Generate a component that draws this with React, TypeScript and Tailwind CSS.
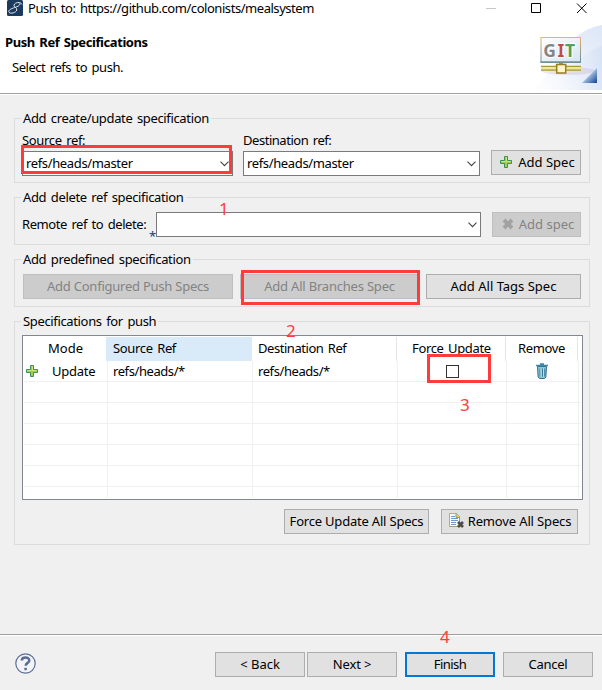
import type { ReactNode } from 'react';

function Group({ title, className, children }: { title: string; className: string; children: ReactNode }) {
  return (
    <section className={`relative ml-[14px] w-[576px] border border-[#dcdcdc] ${className}`}>
      <h2 className="absolute top-[-10px] left-[6px] h-[18px] bg-[#f0f0f0] pr-[2px] pl-[2px] leading-[18px] tracking-[-0.35px]">{title}</h2>
      {children}
    </section>
  );
}

function Btn({ children, className = '', disabled = false, primary = false }: { children: ReactNode; className?: string; disabled?: boolean; primary?: boolean }) {
  const tone = disabled
    ? 'border border-[#bfbfbf] bg-[#cccccc] text-[#838383]'
    : primary
      ? 'border-2 border-[#0078d7] bg-[#e1e1e1]'
      : 'border border-[#adadad] bg-[#e1e1e1]';
  return (
    <button className={`flex h-[25px] shrink-0 items-center justify-center pb-[2px] whitespace-nowrap ${tone} ${className}`}>
      {children}
    </button>
  );
}

function Combo({ value, className }: { value: string; className: string }) {
  return (
    <div className={`flex h-[25px] shrink-0 items-center justify-between border border-[#7a7a7a] bg-white pr-[3px] pl-[3px] ${className}`}>
      <span className="pb-[2px] tracking-[-0.36px]">{value}</span>
      <svg width="9" height="6" viewBox="0 0 9 6" fill="none" stroke="#444" strokeWidth="1.1">
        <path d="M.5 .7 4.5 4.7 8.5 .7" />
      </svg>
    </div>
  );
}

function Plus() {
  return (
    <svg width="12" height="12" viewBox="0 0 12 12" className="shrink-0">
      <path d="M4.5 .5h3v4h4v3h-4v4h-3v-4h-4v-3h4z" fill="#a3cb4e" stroke="#3f8f58" />
      <path d="M5.5 1.5h1v4h4M1.5 5.5h4" fill="none" stroke="#d3e47a" />
    </svg>
  );
}

function Mark({ children, className }: { children: string; className: string }) {
  return <span className={`absolute z-20 text-[17px] leading-[17px] text-[#ff3b3b] ${className}`}>{children}</span>;
}

const rows = [0, 1, 2, 3, 4, 5, 6];

export default function App() {
  return (
    <main className="relative flex h-[690px] w-[602px] flex-col overflow-hidden bg-[#f0f0f0] font-['Noto_Sans',sans-serif] text-[13px] leading-[18px] tracking-[-0.35px] [word-spacing:1.5px] text-black">
      <header className="relative h-[95px] border-b border-white bg-white">
        <svg className="absolute top-[24px] right-0" width="72" height="66" viewBox="0 0 72 66">
          <defs>
            <linearGradient id="sweep" x1="0" y1="1" x2="1" y2="0">
              <stop offset="0" stopColor="#fff" />
              <stop offset=".5" stopColor="#eef3fb" />
              <stop offset="1" stopColor="#dce6f7" />
            </linearGradient>
            <linearGradient id="sweep2" x1="0" y1="0" x2="1" y2="0">
              <stop offset="0" stopColor="#fff" stopOpacity="0" />
              <stop offset="1" stopColor="#cfdcf4" />
            </linearGradient>
            <linearGradient id="panel" x1="0" y1="0" x2="1" y2="1">
              <stop offset="0" stopColor="#fff" />
              <stop offset="1" stopColor="#d5e4f2" />
            </linearGradient>
            <linearGradient id="frame" x1="0" y1="0" x2="0" y2="1">
              <stop offset="0" stopColor="#e6b469" />
              <stop offset="1" stopColor="#648f9f" />
            </linearGradient>
            <linearGradient id="corner" x1="0" y1="0" x2="1" y2="1">
              <stop offset=".4" stopColor="#b7d3f1" />
              <stop offset="1" stopColor="#123f8e" />
            </linearGradient>
          </defs>
          <path d="M0 66C25 55 30 8 72 1v65z" fill="url(#sweep)" />
          <path d="M10 66C35 58 45 30 72 22v44z" fill="url(#sweep2)" opacity=".6" />
          <ellipse cx="38" cy="47" rx="27" ry="4" fill="#b58aa0" opacity=".2" />
          <rect x="11" y="13.500" width="39.500" height="25" fill="url(#panel)" stroke="url(#frame)" />
          <path d="M10.500 38h40.500" stroke="#6f9296" strokeWidth="1.500" />
          <path d="M11 42.500h40M11 46h40" stroke="#a8993a" strokeWidth="1.300" />
          <path d="M11 44.300h40" stroke="#f0e79b" strokeWidth="2" />
          <path d="M31 39v2" stroke="#a8993a" strokeWidth="4" />
          <rect x="26.700" y="40.500" width="9" height="8.500" fill="#fff4cb" stroke="#9b7a29" strokeWidth="1.500" />
          <path d="M67 44v15H52z" fill="url(#corner)" />
          <text y="32.700" fontFamily="Noto Sans, sans-serif" fontWeight="700" fontSize="17.500" letterSpacing="0" stroke="#fff" strokeWidth="2" paintOrder="stroke">
            <tspan x="13.300" fill="#858585">G</tspan>
            <tspan x="27.500" fill="#c04b4b">I</tspan>
            <tspan x="35" fill="#55a05a">T</tspan>
          </text>
        </svg>
        <div className="flex h-[17px] items-start pl-[7px]">
          <svg width="16" height="16" viewBox="0 0 16 16" className="shrink-0">
            <rect width="16" height="16" rx="1.500" fill="#1c3a5e" />
            <path d="M15 4.500C13.500 1.500 8 2.200 7 5c-.8 2.300 3.500 2.500 2.800 5-.8 2.800-6.500 4.200-7.800 2.200-1.200-2 2.500-3.600 5.500-4.600C11 6.500 13.500 5 12.800 3.500" fill="none" stroke="#e5ecf4" strokeWidth="1" />
          </svg>
          <h1 className="mt-[-1px] ml-[5px] tracking-[-0.45px]">Push to: https://github.com/colonists/mealsystem</h1>
          <svg className="absolute top-[3px] left-[486px]" width="102" height="11" viewBox="0 0 102 11" fill="none" stroke="#000">
            <path d="M0 5.500h10" stroke="#c8c8c8" />
            <path d="M45.500 .5h9v9h-9zM91 .5l9.500 9.500M100.500 .5 91 10" />
          </svg>
        </div>
        <div className="pt-[16px] pl-[5px]">
          <p className="font-bold tracking-[-0.42px]">Push Ref Specifications</p>
          <p className="mt-[7px] pl-[7px] tracking-[-0.46px]">Select refs to push.</p>
        </div>
        <div className="absolute bottom-0 left-0 h-px w-full bg-[#a0a0a0]" />
      </header>

      <Group title="Add create/update specification" className="mt-[23px] h-[65px]">
        <div className="flex items-end pt-[12px] pl-[7px]">
          <div className="w-[211px]">
            <p className="h-[20px]">Source ref:</p>
            <Combo value="refs/heads/master" className="w-[211px]" />
          </div>
          <div className="ml-[10px] w-[237px]">
            <p className="h-[20px] tracking-[-0.46px]">Destination ref:</p>
            <Combo value="refs/heads/master" className="w-[237px]" />
          </div>
          <Btn className="mb-px ml-[11px] w-[90px] gap-[6px] pl-[3px] tracking-[0px]"><Plus />Add Spec</Btn>
        </div>
        <div className="absolute top-[26px] left-[6px] h-[29px] w-[211px] border-3 border-[#ff3b3b]" />
      </Group>

      <Group title="Add delete ref specification" className="mt-[14px] h-[48px]">
        <div className="flex items-start pt-[14px] pl-[7px]">
          <span className="mt-[3px] w-[127px] whitespace-nowrap tracking-[-0.42px]">Remote ref to delete:</span>
          <span className="mt-[18px] h-[7px] w-[7px] text-[13px] leading-[13px] text-[#1b3f70]">*</span>
          <Combo value="" className="w-[325px]" />
          <Btn disabled className="ml-[11px] w-[89px] gap-[5px] pl-[3px] tracking-[0px]">
            <svg width="12" height="12" viewBox="0 0 12 12"><path d="m2 2 8 8M10 2l-8 8" stroke="#a2a2a2" strokeWidth="4" /></svg>
            Add spec
          </Btn>
        </div>
        <Mark className="top-[2px] left-[204px]">1</Mark>
      </Group>

      <Group title="Add predefined specification" className="mt-[14px] h-[48px]">
        <div className="flex pt-[14px] pl-[8px]">
          <Btn disabled className="w-[210px] tracking-[-0.24px]">Add Configured Push Specs</Btn>
          <Btn disabled className="ml-[7px] w-[179px] tracking-[-0.2px]">Add All Branches Spec</Btn>
          <Btn className="ml-[7px] w-[155px] tracking-[0px]">Add All Tags Spec</Btn>
        </div>
        <div className="absolute top-[10px] left-[226px] h-[35px] w-[179px] border-3 border-[#ff3b3b]" />
      </Group>

      <Group title="Specifications for push" className="mt-[14px] h-[224px]">
        <div className="mt-[13px] ml-[7px] h-[165px] w-[561px] border border-[#828790] bg-white px-px pt-px">
          <div className="grid h-[24px] grid-cols-[82px_146px_145px_109px_72px_1fr] items-center">
            <span className="pb-[2px] pl-[24px] tracking-[0px]">Mode</span>
            <span className="flex h-full items-center bg-[#d9ebf9] pb-[2px] pl-[7px]">Source Ref</span>
            <span className="flex h-full items-center border-r border-[#e5e5e5] pb-[2px] pl-[6px] tracking-[-0.45px]">Destination Ref</span>
            <span className="flex h-full items-center border-r border-[#e5e5e5] pb-[2px] pl-[15px] tracking-[-0.35px]">Force Update</span>
            <span className="flex h-full items-center border-r border-[#e5e5e5] pb-[2px] pl-[12px]">Remove</span>
          </div>
          {rows.map((i) => (
            <div key={i} className="grid h-[21px] grid-cols-[84px_145px_145px_109px_72px_1fr] border-b border-[#f0f0f0] last:h-[11px] last:border-0">
              <span className="flex items-center border-r border-[#f0f0f0] pl-[2px] tracking-[-0.25px]">{i === 0 && <><Plus /><span className="ml-[14px]">Update</span></>}</span>
              <span className="flex items-center border-r border-[#f0f0f0] pl-[5px] tracking-[-0.42px]">{i === 0 && 'refs/heads/*'}</span>
              <span className="flex items-center border-r border-[#f0f0f0] pl-[5px] tracking-[-0.42px]">{i === 0 && 'refs/heads/*'}</span>
              <span className="flex items-center border-r border-[#f0f0f0] pl-[48px]">{i === 0 && <span className="mt-px size-[13px] border border-[#333]" />}</span>
              <span className="flex items-center border-r border-[#f0f0f0] pl-[29px]">
                {i === 0 && (
                  <svg width="12" height="16" viewBox="0 0 12 16">
                    <path d="M1.500 3.500h9l-.6 10.500-1.400 1.500h-5L2.100 14z" fill="#8cc6d2" stroke="#356f93" />
                    <path d="M4 5.500v8M6.500 5.500v8M8.800 5.500v8" stroke="#2f6d92" strokeWidth=".9" />
                    <path d="M5 5.500v8M7.500 5.500v8" stroke="#c0e8e4" strokeWidth=".9" />
                    <path d="M0 2.500h12M4 1h4" stroke="#4187a6" strokeWidth="1.500" />
                  </svg>
                )}
              </span>
            </div>
          ))}
        </div>
        <div className="mt-[9px] flex justify-end pr-[11px]">
          <Btn className="w-[145px] tracking-[-0.2px]">Force Update All Specs</Btn>
          <Btn className="ml-[12px] w-[137px] gap-[3px] pl-px tracking-[-0.14px]">
            <svg width="16" height="16" viewBox="0 0 16 16" className="shrink-0">
              <path d="M.5 .5h7l3 3v10H.5z" fill="#f8fbff" stroke="#9b9e83" />
              <path d="M.5 13V.5h7l3 3" fill="none" stroke="#c9ac55" />
              <path d="M7 .5v4h4" fill="#e7c66b" stroke="#b99444" />
              <path d="M2 3.500h4M2 5.500h7M2 7.500h7M2 9.500h5M2 11.500h5" stroke="#6d9bce" />
              <path d="m9 9 5 5M14 9l-5 5" stroke="#4c4c4c" strokeWidth="2.700" />
            </svg>
            Remove All Specs
          </Btn>
        </div>
        <div className="absolute top-[32px] left-[412px] h-[29px] w-[64px] border-3 border-[#ff3b3b]" />
        <Mark className="top-0 left-[271px]">2</Mark>
        <Mark className="top-[74px] left-[445px]">3</Mark>
      </Group>

      <footer className="absolute bottom-0 left-0 h-[56px] w-full border-t border-[#a0a0a0]">
        <div className="flex h-full items-start border-t border-white pt-[16px] pl-[15px]">
          <svg width="21" height="21" viewBox="0 0 21 21" className="mt-px shrink-0" fill="none" stroke="#5b6e91">
            <circle cx="10.500" cy="10.500" r="9.700" fill="#f2f4f8" strokeWidth="1.200" />
            <path d="M6.800 7.600C6.800 3.500 14.300 3.600 14.300 7.400c0 2.600-3.600 2.400-3.600 5.400" strokeWidth="2.500" />
            <path d="M10.600 14.800v2.400" strokeWidth="2.500" />
          </svg>
          <Btn className="ml-[179px] w-[90px] tracking-[0px]">&lt; Back</Btn>
          <Btn className="ml-[2px] w-[90px] tracking-[-0.1px]">Next &gt;</Btn>
          <Btn primary className="ml-[8px] w-[90px] tracking-[-0.55px]">Finish</Btn>
          <Btn className="ml-[8px] w-[90px] tracking-[-0.25px]">Cancel</Btn>
        </div>
        <Mark className="top-[-7px] left-[440px]">4</Mark>
      </footer>
    </main>
  );
}
